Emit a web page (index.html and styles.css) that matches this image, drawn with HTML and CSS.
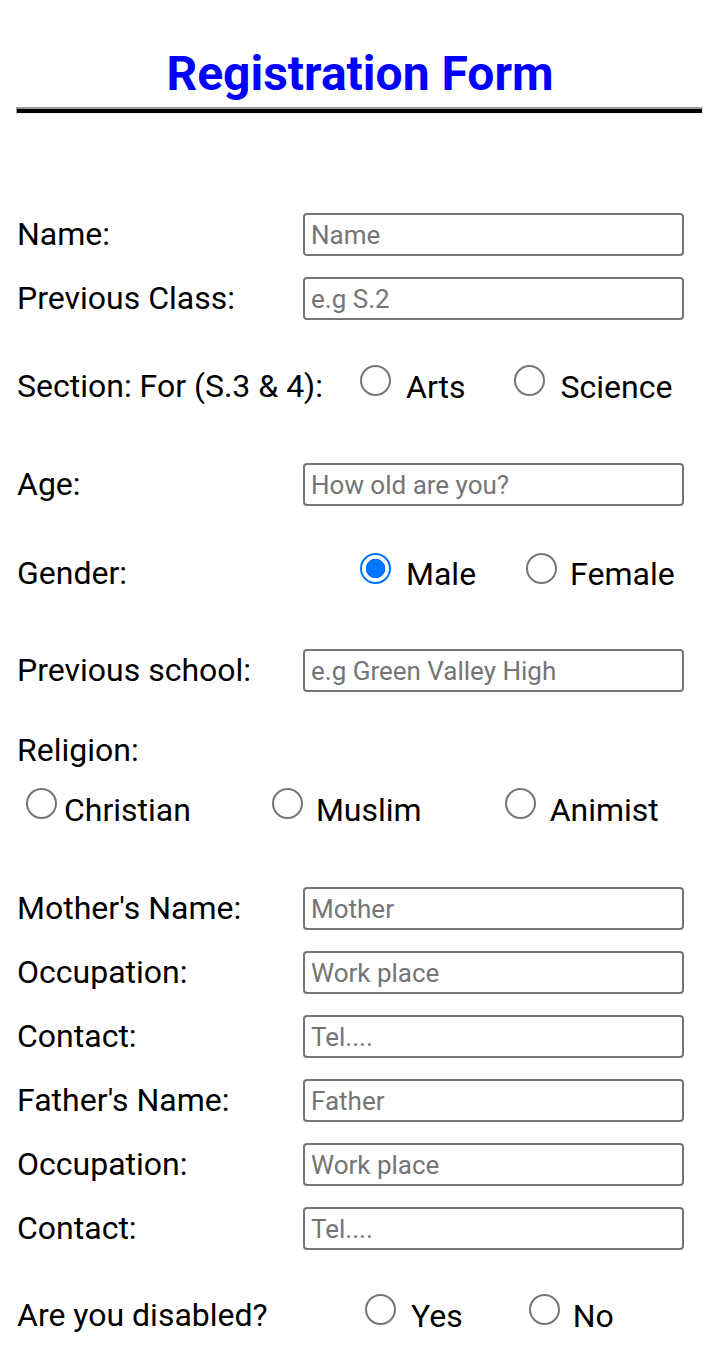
FILE: index.html
```html
<!DOCTYPE html>
<html>
<head>
<meta charset="utf-8">
<link rel="stylesheet" href="styles.css">
</head>
<body>
<h1 class="title">Registration Form</h1>
<hr class="rule">
<form class="form">
  <div class="row row-first">
    <label class="lbl">Name:</label>
    <input class="field" type="text" placeholder="Name">
  </div>
  <div class="row">
    <label class="lbl">Previous Class:</label>
    <input class="field" type="text" placeholder="e.g S.2">
  </div>
  <div class="row row-radio row-section">
    <span class="lbl lbl-auto">Section: For (S.3 &amp; 4):</span>
    <label class="opt opt-arts"><input class="radio" type="radio" name="section"><span>Arts</span></label>
    <label class="opt opt-science"><input class="radio" type="radio" name="section"><span>Science</span></label>
  </div>
  <div class="row row-age">
    <label class="lbl">Age:</label>
    <input class="field" type="text" placeholder="How old are you?">
  </div>
  <div class="row row-radio row-gender">
    <span class="lbl">Gender:</span>
    <label class="opt opt-male"><input class="radio" type="radio" name="gender" checked><span>Male</span></label>
    <label class="opt opt-female"><input class="radio" type="radio" name="gender"><span>Female</span></label>
  </div>
  <div class="row row-school">
    <label class="lbl">Previous school:</label>
    <input class="field" type="text" placeholder="e.g Green Valley High">
  </div>
  <div class="religion">
    <div class="lbl religion-lbl">Religion:</div>
    <div class="religion-opts">
      <label class="opt opt-christian"><input class="radio" type="radio" name="religion"><span>Christian</span></label>
      <label class="opt opt-muslim"><input class="radio" type="radio" name="religion"><span>Muslim</span></label>
      <label class="opt opt-animist"><input class="radio" type="radio" name="religion"><span>Animist</span></label>
    </div>
  </div>
  <div class="row row-mother">
    <label class="lbl">Mother's Name:</label>
    <input class="field" type="text" placeholder="Mother">
  </div>
  <div class="row">
    <label class="lbl">Occupation:</label>
    <input class="field" type="text" placeholder="Work place">
  </div>
  <div class="row">
    <label class="lbl">Contact:</label>
    <input class="field" type="text" placeholder="Tel....">
  </div>
  <div class="row">
    <label class="lbl">Father's Name:</label>
    <input class="field" type="text" placeholder="Father">
  </div>
  <div class="row">
    <label class="lbl">Occupation:</label>
    <input class="field" type="text" placeholder="Work place">
  </div>
  <div class="row">
    <label class="lbl">Contact:</label>
    <input class="field" type="text" placeholder="Tel....">
  </div>
  <div class="row row-radio row-disabled">
    <span class="lbl">Are you disabled?</span>
    <label class="opt opt-yes"><input class="radio" type="radio" name="disabled"><span>Yes</span></label>
    <label class="opt opt-no"><input class="radio" type="radio" name="disabled"><span>No</span></label>
  </div>
</form>
</body>
</html>
```
FILE: styles.css
```css
html, body {
  margin: 0;
  padding: 0;
  background: #fff;
}
body {
  font-family: Roboto, "Liberation Sans", sans-serif;
  color: #000;
  width: 720px;
}
.title {
  margin: 46px 0 0 0;
  height: 56px;
  font-size: 48px;
  line-height: 56px;
  font-weight: 700;
  color: #0000ff;
  text-align: center;
}
.rule {
  margin: 5px 17px 0 16px;
  height: 4px;
  background: #000;
  border: 0;
  border-top: 2px solid #999;
  border-left: 1px solid #999;
  border-bottom: 1px solid #eee;
  border-right: 1px solid #eee;
  box-sizing: content-box;
}
.form {
  margin: 0;
  padding: 0 36px 0 17px;
  display: flex;
  flex-direction: column;
}
.row {
  display: flex;
  align-items: center;
  height: 43px;
  margin-top: 21px;
}
.row-first { margin-top: 99px; }
.lbl {
  font-size: 32px;
  line-height: 38px;
  width: 286px;
  flex: none;
  white-space: nowrap;
  position: relative;
  top: -1px;
}
.lbl-auto { width: auto; }
.field {
  flex: none;
  width: 381px;
  height: 43px;
  box-sizing: border-box;
  border: 2px solid #767676;
  border-radius: 4px;
  padding: 0 6px;
  font-family: Roboto, "Liberation Sans", sans-serif;
  font-size: 26px;
  color: #000;
  outline: none;
  margin: 0;
}
.field::placeholder {
  color: #757575;
}
.opt {
  display: flex;
  align-items: center;
  font-size: 32px;
  line-height: 38px;
  white-space: nowrap;
}
.radio {
  appearance: none;
  -webkit-appearance: none;
  width: 31px;
  height: 31px;
  margin: 0 15px 0 0;
  box-sizing: border-box;
  border: 2px solid #767676;
  border-radius: 50%;
  background: #fff;
  flex: none;
  position: relative;
  top: -6px;
}
.radio:checked {
  border: 2.5px solid #0075ff;
  background: radial-gradient(circle, #0075ff 0 9.5px, #fff 10px);
}
.row-section { margin-top: 45px; }
.opt-arts { margin-left: 37px; }
.opt-science { margin-left: 49px; }
.row-age { margin-top: 55px; }
.row-gender { margin-top: 46px; }
.row-gender .radio { top: -5px; }
.opt-male { margin-left: 57px; }
.opt-female { margin-left: 50px; }
.opt-female .radio { margin-right: 13px; }
.row-school { margin-top: 54px; }
.religion {
  margin-top: 39px;
  display: flex;
  flex-direction: column;
}
.religion-lbl { width: auto; top: 0; }
.religion-opts {
  display: flex;
  align-items: center;
  height: 43px;
  margin-top: 19px;
}
.opt-christian { margin-left: 9px; }
.opt-christian .radio { margin-right: 7px; }
.opt-muslim { margin-left: 81px; }
.opt-muslim .radio { margin-right: 13px; }
.opt-animist { margin-left: 83px; }
.opt-animist .radio { margin-right: 14px; }
.row-mother { margin-top: 56px; }
.row-disabled { margin-top: 44px; }
.opt-yes { margin-left: 62px; }
.opt-yes .radio { margin-right: 15px; }
.opt-no { margin-left: 66px; }
.opt-no .radio { margin-right: 13px; }
```
